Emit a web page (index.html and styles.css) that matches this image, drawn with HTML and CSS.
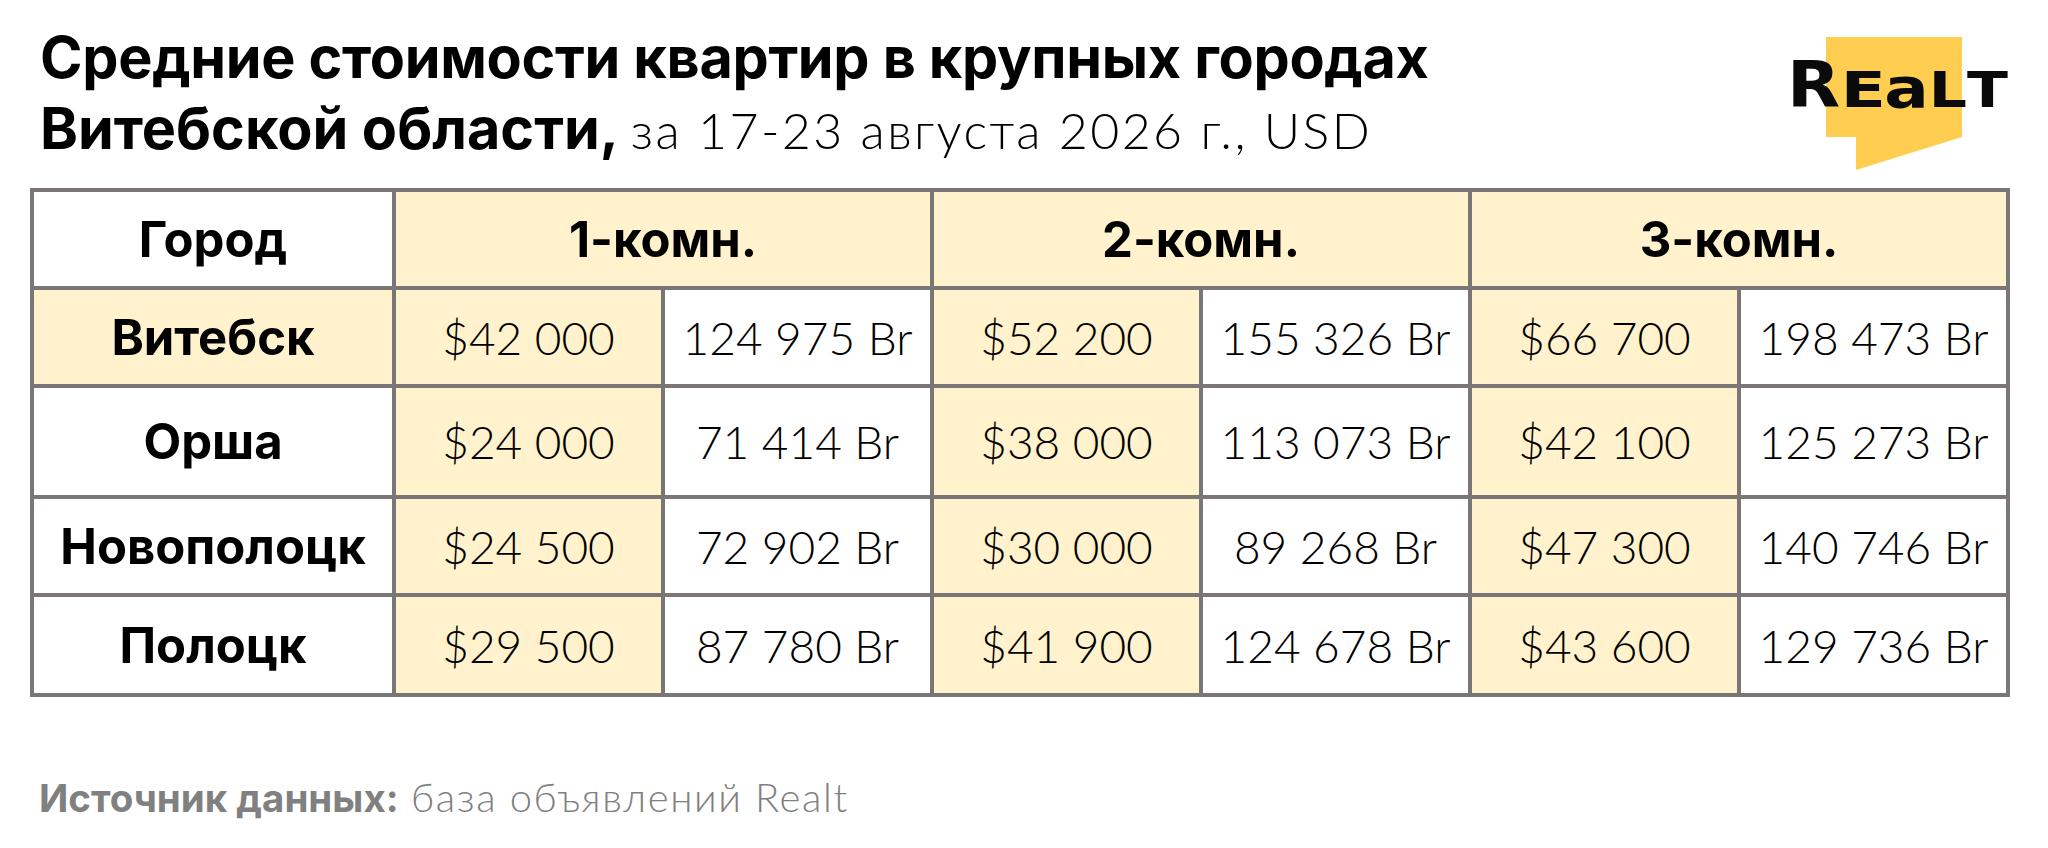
FILE: index.html
```html
<!DOCTYPE html>
<html lang="ru">
<head>
<meta charset="utf-8">
<title>Средние стоимости квартир</title>
<link rel="stylesheet" href="styles.css">
</head>
<body>
<div class="page">
  <header class="head">
    <h1 class="title">
      <span class="line l1">Средние стоимости квартир в крупных городах</span>
      <span class="line">Витебской области, <span class="sub">за 17-23 августа 2026 г., USD</span></span>
    </h1>
    <div class="logo">
      <svg class="logo-shape" width="220" height="134" viewBox="0 0 220 134">
        <polygon points="42,0 178,0 178,100 72,133 72,100 42,100" fill="#FFCD4F"/>
      </svg>
      <div class="logo-text"><span class="lr">R</span><span class="le">E</span><span class="la">a</span><span class="ll">L</span><span class="lt">T</span></div>
    </div>
  </header>

  <table class="grid">
    <colgroup>
      <col class="c-city"><col class="c-v"><col class="c-v"><col class="c-v"><col class="c-v"><col class="c-v"><col class="c-v">
    </colgroup>
    <tr class="r-head">
      <th>Город</th>
      <th colspan="2" class="y">1-комн.</th>
      <th colspan="2" class="y">2-комн.</th>
      <th colspan="2" class="y">3-комн.</th>
    </tr>
    <tr class="r1">
      <th class="y">Витебск</th>
      <td class="y">$42 000</td><td>124 975 Br</td>
      <td class="y">$52 200</td><td>155 326 Br</td>
      <td class="y">$66 700</td><td>198 473 Br</td>
    </tr>
    <tr class="r2">
      <th>Орша</th>
      <td class="y">$24 000</td><td>71 414 Br</td>
      <td class="y">$38 000</td><td>113 073 Br</td>
      <td class="y">$42 100</td><td>125 273 Br</td>
    </tr>
    <tr class="r3">
      <th>Новополоцк</th>
      <td class="y">$24 500</td><td>72 902 Br</td>
      <td class="y">$30 000</td><td>89 268 Br</td>
      <td class="y">$47 300</td><td>140 746 Br</td>
    </tr>
    <tr class="r4">
      <th>Полоцк</th>
      <td class="y">$29 500</td><td>87 780 Br</td>
      <td class="y">$41 900</td><td>124 678 Br</td>
      <td class="y">$43 600</td><td>129 736 Br</td>
    </tr>
  </table>

  <p class="source"><b>Источник данных:</b> база объявлений Realt</p>
</div>
</body>
</html>
```

FILE: styles.css
```css
* { box-sizing: border-box; }
html, body { margin: 0; padding: 0; background: #ffffff; }
body { width: 2048px; height: 848px; overflow: hidden; font-family: Inter, "Noto Sans", "Liberation Sans", sans-serif; color: #000; }

.page { padding: 22px 0 0 30px; }

.head { display: flex; justify-content: space-between; align-items: flex-start; padding-left: 10px; padding-right: 44px; }

.title { margin: 0; font-size: 57.5px; font-weight: 700; line-height: 71px; letter-spacing: 0; }
.title .line { display: block; white-space: nowrap; }
.title .l1 { letter-spacing: -0.3px; }
.title .sub { font-family: Lato, Inter, sans-serif; font-weight: 300; font-size: 50px; letter-spacing: 2.4px; }

.logo { position: relative; width: 220px; height: 134px; margin-top: 15px; }
.logo-shape { position: absolute; left: 0; top: 0; }
.logo-text { position: absolute; left: 0; top: 0; height: 73px; display: flex; align-items: baseline; padding-top: 16px; font-family: "DejaVu Sans", sans-serif; font-weight: 700; color: #0a0a0a; line-height: 1; transform: scaleX(1.2); transform-origin: 0 0; }
.logo-text span { display: inline-block; }
.lr { font-size: 64px; transform: scaleX(0.9); }
.le { font-size: 50px; transform: scaleX(1.1); }
.la { font-size: 55px; }
.ll { font-size: 50px; }
.lt { font-size: 50px; }

.grid { border-collapse: collapse; table-layout: fixed; width: 1976px; margin-top: 17px; }
.c-city { width: 362px; }
.c-v { width: 269px; }
.grid th, .grid td { border: 4px solid #7b7676; text-align: center; vertical-align: middle; padding: 0; white-space: nowrap; }
.grid th { font-weight: 700; font-size: 49px; }
.grid td { font-family: Lato, Inter, sans-serif; font-weight: 300; font-size: 46px; }
.grid .y { background: #FFF2CC; }

.r-head { height: 98px; }
.r1 { height: 98px; }
.r2 { height: 111px; }
.r3 { height: 98px; }
.r4 { height: 100px; }

.source { margin: 77px 0 0 9px; font-size: 40px; line-height: 46px; font-family: Lato, Inter, sans-serif; font-weight: 300; letter-spacing: 1.6px; color: #808080; }
.source b { font-family: Inter, sans-serif; font-weight: 700; font-size: 38.5px; letter-spacing: 0; }
```
